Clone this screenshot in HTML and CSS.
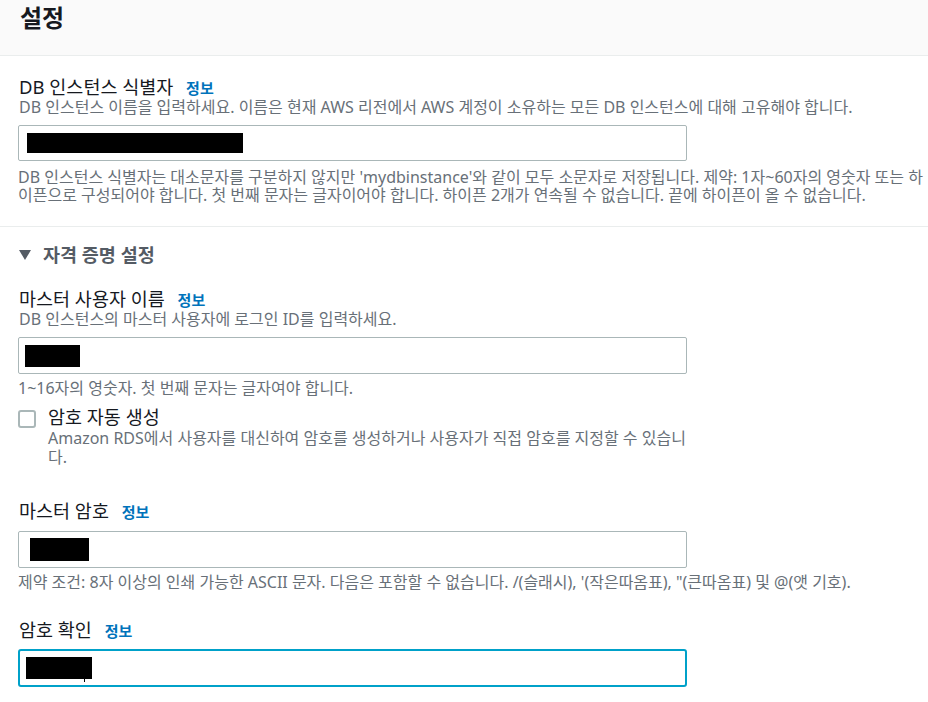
FILE: index.html
```html
<!DOCTYPE html>
<html lang="ko">
<head>
<meta charset="utf-8">
<link rel="stylesheet" href="styles.css">
</head>
<body>
<div class="header"><h1>설정</h1></div>
<div class="block">
  <div class="field">
    <div class="label">DB 인스턴스 식별자 <span class="info">정보</span></div>
    <div class="desc">DB 인스턴스 이름을 입력하세요. 이름은 현재 AWS 리전에서 AWS 계정이 소유하는 모든 DB 인스턴스에 대해 고유해야 합니다.</div>
    <div class="input"><span class="redact r1"></span></div>
    <div class="hint">DB 인스턴스 식별자는 대소문자를 구분하지 않지만 'mydbinstance'와 같이 모두 소문자로 저장됩니다. 제약: 1자~60자의 영숫자 또는 하이픈으로 구성되어야 합니다. 첫 번째 문자는 글자이어야 합니다. 하이픈 2개가 연속될 수 없습니다. 끝에 하이픈이 올 수 없습니다.</div>
  </div>
</div>
<div class="divider"></div>
<div class="block">
  <div class="section-title"><span class="caret"></span>자격 증명 설정</div>
  <div class="field user">
    <div class="label">마스터 사용자 이름 <span class="info">정보</span></div>
    <div class="desc">DB 인스턴스의 마스터 사용자에 로그인 ID를 입력하세요.</div>
    <div class="input tall"><span class="redact r2"></span></div>
    <div class="hint">1~16자의 영숫자. 첫 번째 문자는 글자여야 합니다.</div>
  </div>
  <div class="check">
    <span class="box"></span>
    <div class="check-text">
      <div class="check-label">암호 자동 생성</div>
      <div class="check-desc">Amazon RDS에서 사용자를 대신하여 암호를 생성하거나 사용자가 직접 암호를 지정할 수 있습니다.</div>
    </div>
  </div>
  <div class="field pw">
    <div class="label">마스터 암호 <span class="info">정보</span></div>
    <div class="input tall"><span class="redact r3"></span></div>
    <div class="hint">제약 조건: 8자 이상의 인쇄 가능한 ASCII 문자. 다음은 포함할 수 없습니다. /(슬래시), '(작은따옴표), "(큰따옴표) 및 @(앳 기호).</div>
  </div>
  <div class="field confirm">
    <div class="label">암호 확인 <span class="info">정보</span></div>
    <div class="input focus"><span class="redact r4"></span><span class="cursor"></span></div>
  </div>
</div>
</body>
</html>
```
FILE: styles.css
```css
html, body {
  margin: 0;
  padding: 0;
  background: #ffffff;
  font-family: "Noto Sans", "Noto Sans CJK KR", sans-serif;
  color: #16191f;
}
.header {
  height: 55px;
  background: #fafafa;
  border-bottom: 1px solid #eaeded;
  padding: 0 20px;
}
.header h1 {
  margin: 0;
  font-size: 24px;
  line-height: 36px;
  font-weight: 700;
  color: #16191f;
}
.block {
  padding: 0 4px 0 18px;
}
.field {
  padding-top: 20px;
}
.label {
  font-size: 18.5px;
  line-height: 21px;
  height: 21px;
  color: #16191f;
  padding-left: 1px;
}
.info {
  color: #0073bb;
  font-size: 15px;
  line-height: 15px;
  font-weight: 700;
  margin-left: 8px;
}
.desc {
  font-size: 16px;
  line-height: 20px;
  color: #687078;
  padding-left: 1px;
}
.input {
  margin-top: 8px;
  width: 669px;
  height: 36px;
  box-sizing: border-box;
  border: 1px solid #aab7b8;
  border-radius: 2px;
  display: flex;
  align-items: center;
  position: relative;
}
.input.tall {
  height: 37px;
}
.input.focus {
  border: 2px solid #00a1c9;
  border-radius: 3px;
  height: 38px;
}
.redact {
  display: block;
  background: #000;
  height: 20px;
}
.r1 { width: 216px; margin-left: 8px; }
.r2 { width: 55px; height: 22px; margin-left: 6px; }
.r3 { width: 59px; height: 23px; margin-left: 11px; }
.r4 { width: 66px; height: 22px; margin-left: 6px; }
.cursor {
  position: absolute;
  left: 64px;
  top: 27px;
  width: 1px;
  height: 4px;
  background: #000;
}
.hint {
  margin-top: 7px;
  font-size: 16px;
  line-height: 18px;
  color: #687078;
}
.divider {
  height: 1px;
  background: #eaeded;
  margin-top: 22px;
}
.section-title {
  margin-top: 17px;
  font-size: 18.5px;
  line-height: 22px;
  height: 22px;
  font-weight: 700;
  color: #545b64;
  display: flex;
  align-items: center;
}
.caret {
  width: 0;
  height: 0;
  border-left: 6px solid transparent;
  border-right: 6px solid transparent;
  border-top: 10px solid #545b64;
  margin: 0 12px 0 1px;
}
.field.user {
  padding-top: 22px;
}
.field.user .hint {
  margin-top: 5px;
}
.check {
  display: flex;
  margin-top: 8px;
}
.box {
  width: 18px;
  height: 18px;
  box-sizing: border-box;
  border: 2px solid #aab7b8;
  border-radius: 3px;
  margin-top: 5px;
  flex: none;
}
.check-text {
  margin-left: 12px;
  width: 640px;
}
.check-label {
  font-size: 18.5px;
  line-height: 24px;
  height: 24px;
}
.check-desc {
  font-size: 16px;
  line-height: 19px;
  color: #687078;
}
.field.pw {
  padding-top: 33px;
}
.field.pw .input {
  margin-top: 10px;
}
.field.pw .hint {
  margin-top: 5px;
}
.field.confirm {
  padding-top: 28px;
}
.field.confirm .input {
  margin-top: 9px;
}
```
